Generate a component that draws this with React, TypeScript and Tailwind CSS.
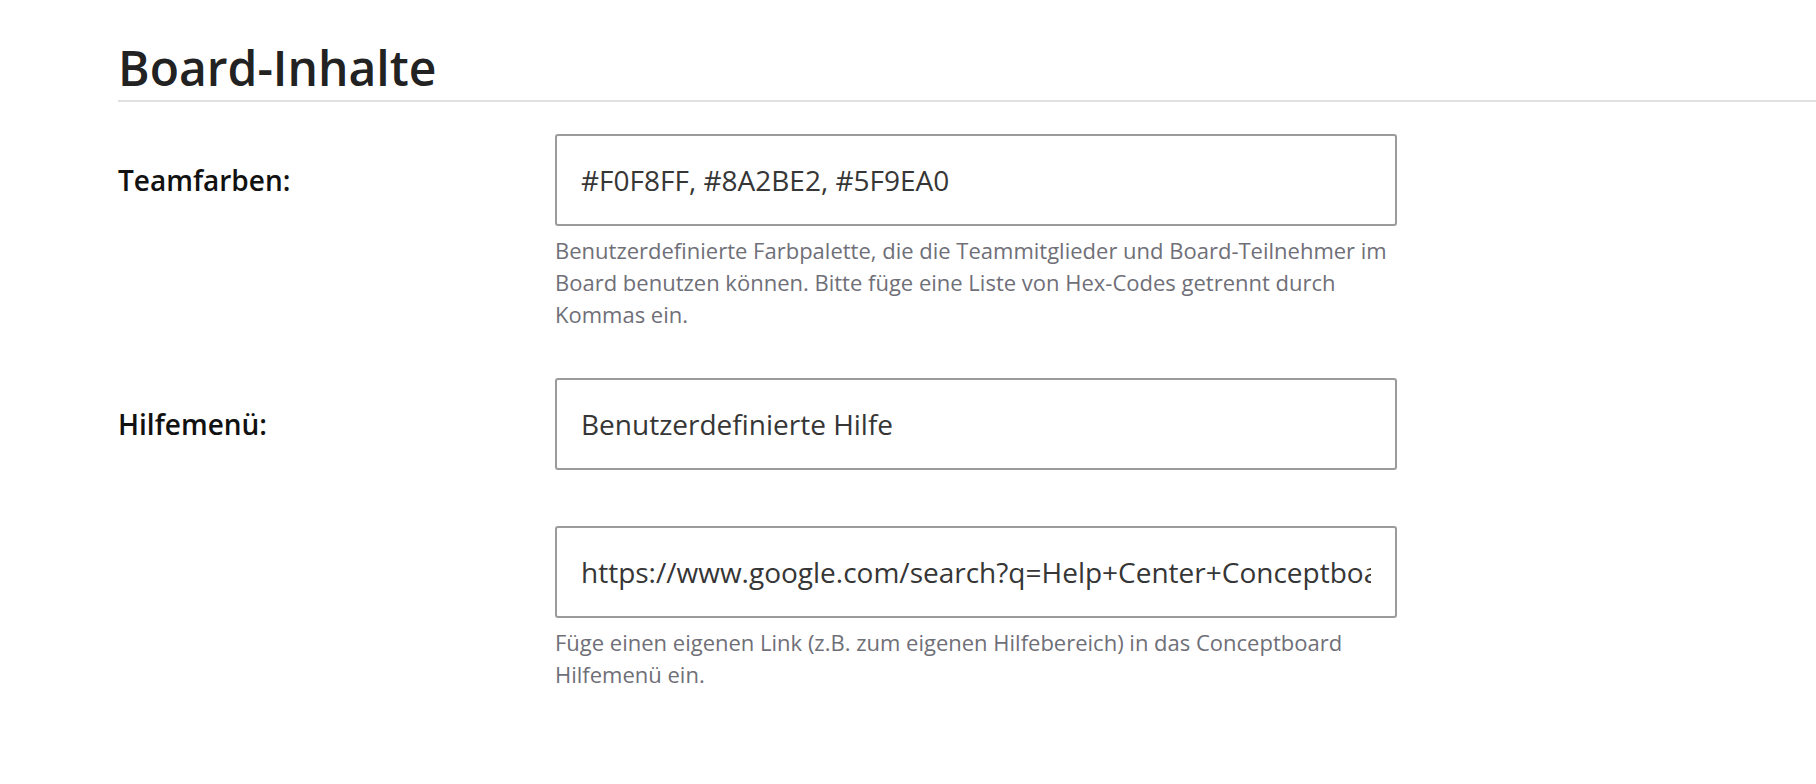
const FONT = { fontFamily: '"Open Sans", "Noto Sans", sans-serif' };

interface FieldProps {
  value: string;
  help?: string;
}

const Field = ({ value, help }: FieldProps) => (
  <div className="mb-[48px] flex flex-col">
    <input
      readOnly
      value={value}
      className="block h-[92px] w-[842px] rounded-[3px] border-2 border-[#9b9b9b] bg-white pl-[24px] pr-[24px] text-[28px] text-[#363636] outline-none"
      style={FONT}
    />
    <p className="mt-[8px] w-[842px] text-[22px] leading-[32px] text-[#6f6f78]">
      {help}
    </p>
  </div>
);

interface RowProps {
  label?: string;
  children: React.ReactNode;
}

const Row = ({ label, children }: RowProps) => (
  <div className="flex">
    <div className="w-[437px] shrink-0">
      {label && (
        <div className="flex h-[92px] items-center text-[28px] font-semibold text-[#111]">
          {label}
        </div>
      )}
    </div>
    <div>{children}</div>
  </div>
);

export default function App() {
  return (
    <div className="min-h-[784px] bg-white pl-[118px]" style={FONT}>
      <h1 className="mt-[39px] border-b-2 border-[#e0e0e0] pb-[3px] text-[48px] leading-[58px] font-semibold text-[#222]">
        Board-Inhalte
      </h1>
      <div className="pt-[32px]">
        <Row label="Teamfarben:">
          <Field
            value="#F0F8FF, #8A2BE2, #5F9EA0"
            help="Benutzerdefinierte Farbpalette, die die Teammitglieder und Board-Teilnehmer im Board benutzen können. Bitte füge eine Liste von Hex-Codes getrennt durch Kommas ein."
          />
        </Row>
        <Row label="Hilfemenü:">
          <Field value="Benutzerdefinierte Hilfe" />
        </Row>
        <Row>
          <Field
            value="https://www.google.com/search?q=Help+Center+Conceptboard"
            help="Füge einen eigenen Link (z.B. zum eigenen Hilfebereich) in das Conceptboard Hilfemenü ein."
          />
        </Row>
      </div>
    </div>
  );
}
